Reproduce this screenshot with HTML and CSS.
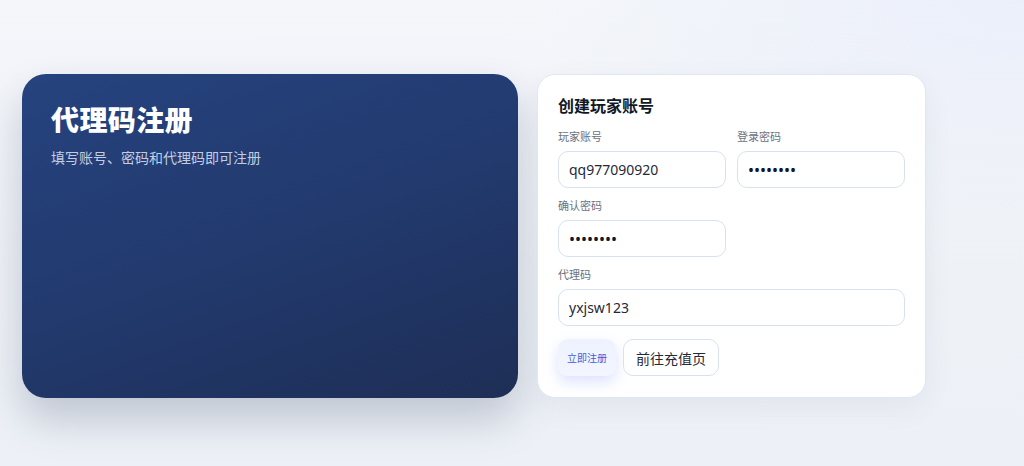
FILE: index.html
```html
<!DOCTYPE html>
<html lang="zh-CN">
<head>
<meta charset="utf-8">
<title>代理码注册</title>
<link rel="stylesheet" href="styles.css">
</head>
<body>
<main class="layout">
  <section class="hero">
    <h1 class="hero-title">代理码注册</h1>
    <p class="hero-sub">填写账号、密码和代理码即可注册</p>
  </section>
  <section class="panel">
    <h2 class="panel-title">创建玩家账号</h2>
    <div class="grid">
      <label class="field">
        <span class="label">玩家账号</span>
        <input class="input" type="text" value="qq977090920">
      </label>
      <label class="field">
        <span class="label">登录密码</span>
        <input class="input input-pass" type="password" value="12345678">
      </label>
      <label class="field">
        <span class="label">确认密码</span>
        <input class="input input-pass" type="password" value="12345678">
      </label>
      <div></div>
      <label class="field wide">
        <span class="label">代理码</span>
        <input class="input" type="text" value="yxjsw123">
      </label>
    </div>
    <div class="actions">
      <button class="btn btn-primary" type="button">立即注册</button>
      <button class="btn btn-ghost" type="button">前往充值页</button>
    </div>
  </section>
</main>
</body>
</html>
```

FILE: styles.css
```css
* { box-sizing: border-box; }
html, body { height: 100%; }
body {
  margin: 0;
  font-family: "Noto Sans", "Noto Sans CJK SC", sans-serif;
  background:
    radial-gradient(ellipse 650px 320px at 100% 0%, rgba(229, 235, 251, 0.6), rgba(229, 235, 251, 0) 75%),
    linear-gradient(180deg, #f4f6fa 0%, #eef1f6 60%, #edf1f7 100%);
  overflow: hidden;
}
.layout {
  display: grid;
  grid-template-columns: 496px 389px;
  column-gap: 19px;
  align-items: stretch;
  padding: 74px 0 0 22px;
}
.hero {
  border-radius: 24px;
  padding: 28px 29px;
  background: linear-gradient(160deg, #26437f 0%, #223a6e 50%, #1e2e56 100%);
  box-shadow: 0 22px 40px rgba(30, 45, 80, 0.22);
  color: #fff;
}
.hero-title {
  margin: 0;
  font-size: 28px;
  line-height: 36px;
  font-weight: 800;
  letter-spacing: 0.4px;
}
.hero-sub {
  margin: 10px 0 0;
  font-size: 14px;
  line-height: 20px;
  color: #c3cde0;
}
.panel {
  background: #fff;
  border: 1px solid #e1e7f1;
  border-radius: 18px;
  padding: 20px 20px 21px;
  box-shadow: 0 10px 30px rgba(30, 45, 80, 0.06);
}
.panel-title {
  margin: 0;
  font-size: 16px;
  line-height: 23px;
  font-weight: 700;
  color: #111827;
}
.grid {
  margin-top: 11px;
  display: grid;
  grid-template-columns: 1fr 1fr;
  column-gap: 11px;
  row-gap: 10px;
}
.field {
  display: flex;
  flex-direction: column;
  gap: 6px;
}
.wide { grid-column: 1 / -1; }
.label {
  font-size: 11px;
  line-height: 16px;
  color: #6b7280;
}
.input {
  height: 37px;
  width: 100%;
  border: 1px solid #d9e1ef;
  border-radius: 10px;
  padding: 0 10px;
  font-family: "Noto Sans", "Noto Sans CJK SC", sans-serif;
  font-size: 14px;
  color: #1f2937;
  background: #fff;
  outline: none;
}
.input-pass {
  font-size: 16px;
  color: #111827;
}
.actions {
  margin-top: 13px;
  display: flex;
  gap: 7px;
}
.btn {
  height: 37px;
  border-radius: 10px;
  font-family: "Noto Sans", "Noto Sans CJK SC", sans-serif;
  cursor: pointer;
}
.btn-primary {
  width: 58px;
  padding: 0;
  border: none;
  font-size: 10px;
  color: #3f5fd6;
  background: linear-gradient(180deg, #eef2fe 0%, #f3f6ff 100%);
  box-shadow: 0 6px 14px rgba(96, 125, 245, 0.22);
}
.btn-ghost {
  padding: 0 12px;
  border: 1px solid #d9e1ef;
  background: #fff;
  font-size: 14px;
  color: #1f2937;
}
```
